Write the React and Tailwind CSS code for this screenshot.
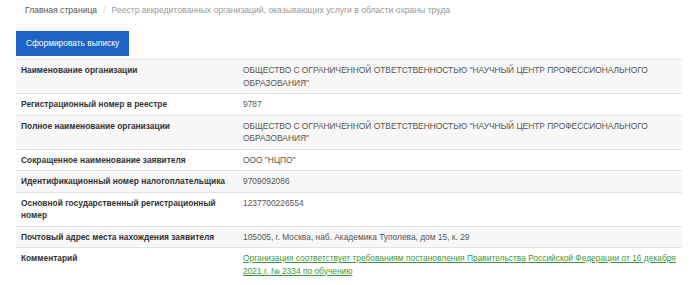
import React from 'react'

const rows = [
  ["Наименование организации", 'ОБЩЕСТВО С ОГРАНИЧЕННОЙ ОТВЕТСТВЕННОСТЬЮ "НАУЧНЫЙ ЦЕНТР ПРОФЕССИОНАЛЬНОГО ОБРАЗОВАНИЯ"'],
  ["Регистрационный номер в реестре", "9787"],
  ["Полное наименование организации", 'ОБЩЕСТВО С ОГРАНИЧЕННОЙ ОТВЕТСТВЕННОСТЬЮ "НАУЧНЫЙ ЦЕНТР ПРОФЕССИОНАЛЬНОГО ОБРАЗОВАНИЯ"'],
  ["Сокращенное наименование заявителя", 'ООО "НЦПО"'],
  ["Идентификационный номер налогоплательщика", "9709092086"],
  ["Основной государственный регистрационный номер", "1237700226554"],
  ["Почтовый адрес места нахождения заявителя", "105005, г. Москва, наб. Академика Туполева, дом 15, к. 29"],
]

const App = () => {
  return (
    <div className="bg-white w-[700px] h-[285px] overflow-hidden px-4 font-['Liberation_Sans',Arial,sans-serif] text-[8.4px] leading-[12.5px]">
      <div className="flex items-center gap-[5px] pl-[9px] pt-[3px] h-[18px] text-[8.6px] text-[#999]">
        <span className="text-[#555]">Главная страница</span>
        <span className="text-[#ccc] px-[1px]">/</span>
        <span>Реестр аккредитованных организаций, оказывающих услуги в области охраны труда</span>
      </div>

      <button className="mt-[13px] h-[25px] w-[113px] bg-[#1c63c5] text-white text-[8.4px]">
        Сформировать выписку
      </button>

      <table className="mt-[3px] w-[666px] border-collapse">
        <tbody>
          {rows.map(([label, value], i) => (
            <tr key={label} className={i % 2 === 0 ? "bg-[#f7f7f7]" : "bg-white"}>
              <td className="w-[222px] align-top border-t border-[#e4e4e4] px-[5px] py-[4px] font-bold text-[#333]">
                {label}
              </td>
              <td className="align-top border-t border-[#e4e4e4] px-[5px] py-[4px] text-[#555]">
                {value}
              </td>
            </tr>
          ))}
          <tr className="bg-white">
            <td className="align-top border-t border-[#e4e4e4] px-[5px] py-[4px] font-bold text-[#333]">
              Комментарий
            </td>
            <td className="align-top border-t border-[#e4e4e4] px-[5px] py-[4px]">
              <a href="#" className="text-[#3a9a3a] underline">
                Организация соответствует требованиям постановления Правительства Российской Федерации от 16 декабря 2021 г. № 2334 по обучению
              </a>
            </td>
          </tr>
        </tbody>
      </table>
    </div>
  )
}

export default App
